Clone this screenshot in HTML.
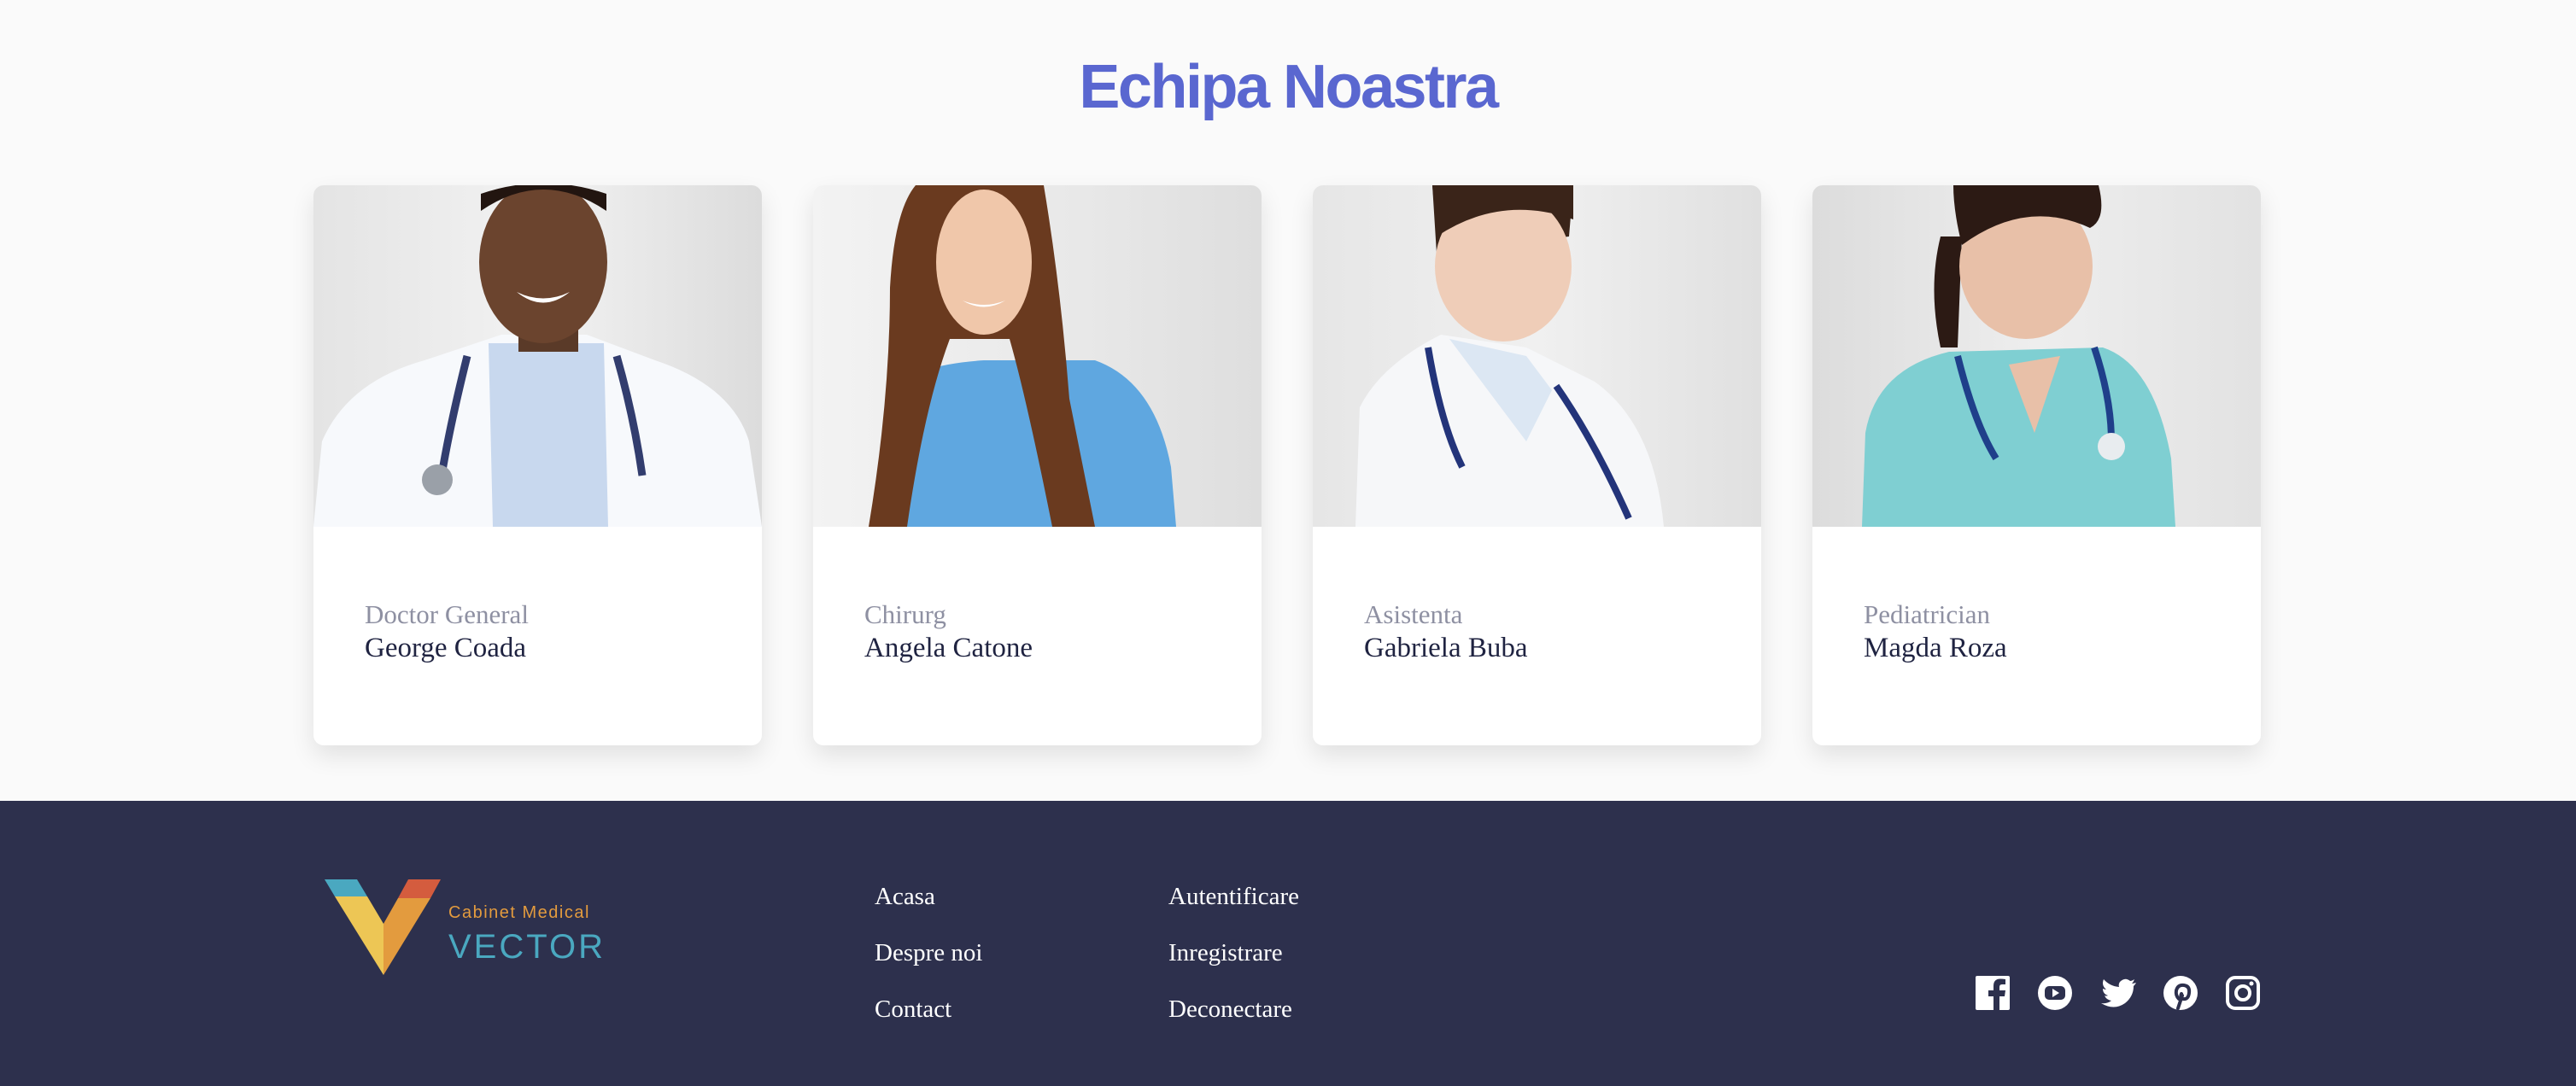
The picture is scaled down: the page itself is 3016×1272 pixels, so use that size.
<!DOCTYPE html>
<html><head><meta charset="utf-8"><style>
*{margin:0;padding:0;box-sizing:border-box}
body{width:3016px;height:1272px;background:#fafafa;position:relative;overflow:hidden;font-family:"Liberation Serif",serif}
h1{position:absolute;top:52px;left:0;width:3016px;text-align:center;font-family:"Liberation Sans",sans-serif;font-weight:700;font-size:72px;color:#5a67d0;letter-spacing:-2.5px;line-height:100px}
.card{position:absolute;top:217px;width:525px;height:656px;background:#fff;border-radius:12px;overflow:hidden;box-shadow:0 12px 28px rgba(0,0,0,.10)}
.card svg{display:block;width:525px;height:400px}
.t1{position:absolute;left:60px;top:485px;font-size:31px;color:#8e90a2}
.t2{position:absolute;left:60px;top:524px;font-size:33px;color:#1f2341}
footer{position:absolute;top:938px;left:0;width:3016px;height:334px;background:#2d304d}
.lk{position:absolute;color:#fff;font-size:29px}
</style></head><body>
<h1>Echipa Noastra</h1>

<div class="card" style="left:367px">
<svg viewBox="0 0 525 400"><defs><linearGradient id="bg1" x1="0" x2="1"><stop offset="0" stop-color="#e4e4e4"/><stop offset=".5" stop-color="#f2f2f2"/><stop offset="1" stop-color="#dcdcdc"/></linearGradient></defs>
<rect width="525" height="400" fill="url(#bg1)"/>
<path d="M0 400 L10 300 Q40 230 130 205 L220 175 L320 175 L400 205 Q490 235 510 300 L525 400Z" fill="#f7f9fc"/>
<path d="M205 185 L340 185 L345 400 L210 400Z" fill="#c8d8ee"/>
<rect x="240" y="150" width="70" height="45" fill="#5a3a28"/>
<ellipse cx="269" cy="90" rx="75" ry="95" fill="#6b442e"/>
<path d="M196 30 Q269 -20 343 30 L343 10 Q269 -15 196 10Z" fill="#221510"/>
<path d="M238 125 Q269 150 300 125 Q269 140 238 125Z" fill="#fff"/>
<path d="M180 200 Q160 280 150 340 M355 200 Q375 270 385 340" stroke="#323d6e" stroke-width="9" fill="none"/>
<circle cx="145" cy="345" r="18" fill="#9aa0a8"/>
</svg>
<div class="t1">Doctor General</div><div class="t2">George Coada</div></div>

<div class="card" style="left:952px">
<svg viewBox="0 0 525 400"><defs><linearGradient id="bg2" x1="0" x2="1"><stop offset="0" stop-color="#f3f3f3"/><stop offset=".6" stop-color="#e8e8e8"/><stop offset="1" stop-color="#dedede"/></linearGradient></defs>
<rect width="525" height="400" fill="url(#bg2)"/>
<path d="M79 400 L90 240 Q120 210 200 205 L330 205 Q400 230 419 330 L425 400Z" fill="#5fa7e0"/>
<path d="M120 0 Q200 -20 270 0 Q290 120 300 250 L330 400 L280 400 Q250 250 230 180 L160 180 Q130 260 110 400 L65 400 Q90 250 90 120 Q95 30 120 0Z" fill="#6a3a1f"/>
<ellipse cx="200" cy="90" rx="56" ry="85" fill="#f0c7aa"/>
<path d="M175 135 Q200 150 225 135 Q200 145 175 135Z" fill="#fff"/>
</svg>
<div class="t1">Chirurg</div><div class="t2">Angela Catone</div></div>

<div class="card" style="left:1537px">
<svg viewBox="0 0 525 400"><defs><linearGradient id="bg3" x1="0" x2="1"><stop offset="0" stop-color="#e6e6e6"/><stop offset=".5" stop-color="#f0f0f0"/><stop offset="1" stop-color="#e0e0e0"/></linearGradient></defs>
<rect width="525" height="400" fill="url(#bg3)"/>
<path d="M50 400 L55 260 Q80 210 150 175 L250 190 L330 230 Q400 280 411 400Z" fill="#f6f7f9"/>
<path d="M160 180 L250 300 L280 240 L250 200Z" fill="#dce7f3"/>
<path d="M140 0 L305 0 L300 60 L145 80Z" fill="#3a2419"/>
<ellipse cx="223" cy="95" rx="80" ry="88" fill="#efcdb8"/>
<path d="M140 0 Q225 -10 305 0 L305 40 Q220 10 145 60Z" fill="#3a2419"/>
<path d="M135 190 Q150 280 175 330 M285 235 Q330 300 370 390" stroke="#23347a" stroke-width="8" fill="none"/>
</svg>
<div class="t1">Asistenta</div><div class="t2">Gabriela Buba</div></div>

<div class="card" style="left:2122px">
<svg viewBox="0 0 525 400"><defs><linearGradient id="bg4" x1="0" x2="1"><stop offset="0" stop-color="#dcdcdc"/><stop offset=".5" stop-color="#eeeeee"/><stop offset="1" stop-color="#e2e2e2"/></linearGradient></defs>
<rect width="525" height="400" fill="url(#bg4)"/>
<path d="M150 60 Q135 120 150 190 L170 190 L175 60Z" fill="#2c1a14"/>
<path d="M58 400 L62 290 Q75 215 160 195 L340 190 Q400 210 420 320 L425 400Z" fill="#7fcfd2"/>
<path d="M230 210 L260 290 L290 200Z" fill="#e8c0a8"/>
<ellipse cx="250" cy="95" rx="78" ry="85" fill="#e8c0a8"/>
<path d="M165 0 L335 0 Q345 40 325 50 Q250 15 175 70 Q165 30 165 0Z" fill="#2c1a14"/>
<path d="M170 200 Q190 280 215 320 M330 190 Q350 250 350 300" stroke="#1f3f8a" stroke-width="8" fill="none"/>
<circle cx="350" cy="306" r="16" fill="#e8ecef"/>
</svg>
<div class="t1">Pediatrician</div><div class="t2">Magda Roza</div></div>

<footer>
<svg style="position:absolute;left:380px;top:92px" width="136" height="112" viewBox="0 0 136 112">
<polygon points="0,0 38,0 50,20 12,20" fill="#4aa8c0"/>
<polygon points="12,20 50,20 69,52 69,112" fill="#edc655"/>
<polygon points="98,0 136,0 124,22 86,22" fill="#d45c3e"/>
<polygon points="86,22 124,22 69,112 69,52" fill="#e39b3e"/>
</svg>
<div style="position:absolute;left:525px;top:120px;font-family:'Liberation Sans',sans-serif;font-size:20px;letter-spacing:1.5px;color:#e39b3e">Cabinet Medical</div>
<div style="position:absolute;left:525px;top:146px;font-family:'Liberation Sans',sans-serif;font-size:40px;letter-spacing:3px;color:#4aa8c0;line-height:50px">VECTOR</div>
<div class="lk" style="left:1024px;top:96px">Acasa</div>
<div class="lk" style="left:1024px;top:162px">Despre noi</div>
<div class="lk" style="left:1024px;top:228px">Contact</div>
<div class="lk" style="left:1368px;top:96px">Autentificare</div>
<div class="lk" style="left:1368px;top:162px">Inregistrare</div>
<div class="lk" style="left:1368px;top:228px">Deconectare</div>
<svg style="position:absolute;left:2313px;top:204px" width="340" height="42" viewBox="0 0 340 42">
<rect x="0" y="1" width="40" height="40" rx="2" fill="#fff"/>
<path d="M28 41 V25 H34 L35 18 H28 V14 Q28 11 31 11 H35 V5 Q32 4.5 29 4.5 Q21 4.5 21 13 V18 H15 V25 H21 V41Z" fill="#2d304d"/>
<circle cx="93" cy="21" r="20" fill="#fff"/>
<rect x="81" y="13" width="24" height="16" rx="5" fill="#2d304d"/>
<polygon points="90,16 90,26 98,21" fill="#fff"/>
<path transform="translate(25,0)" d="M163 9 Q160 10 158 10 Q160 8 161 5 Q158 7 156 7 Q150 2 144 8 Q142 11 143 14 Q132 13 125 5 Q122 12 128 17 Q126 17 124 16 Q124 22 130 24 Q128 25 126 24 Q128 29 134 30 Q129 34 122 33 Q137 42 150 33 Q160 25 160 13 Q162 11 163 9Z" fill="#fff"/>
<circle cx="240" cy="21" r="20" fill="#fff"/>
<path d="M237 39 L242 24 M238 28 Q234 24 235 18 Q237 11 244 12 Q251 13 250 21 Q249 29 243 28 Q239 27 241 22" stroke="#2d304d" stroke-width="4" fill="none" stroke-linecap="round"/>
<rect x="295" y="3" width="36" height="36" rx="9" stroke="#fff" stroke-width="4" fill="none"/>
<circle cx="313" cy="21" r="8" stroke="#fff" stroke-width="4" fill="none"/>
<circle cx="323" cy="10" r="2.5" fill="#fff"/>
</svg>
</footer>
</body></html>
